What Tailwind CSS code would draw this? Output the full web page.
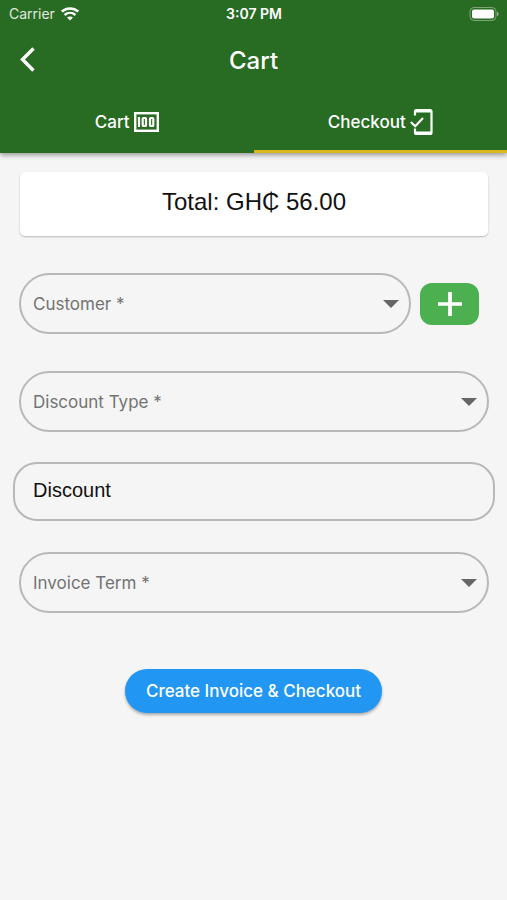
<!DOCTYPE html>
<html lang="en">
<head>
<meta charset="utf-8">
<meta name="viewport" content="width=device-width, initial-scale=1">
<title>Cart</title>
<script src="https://cdn.jsdelivr.net/npm/@tailwindcss/browser@4"></script>
</head>
<body class="min-h-screen bg-[#f5f5f5] font-['Inter','Liberation_Sans',sans-serif]">
<header class="bg-[#286b22] text-white shadow-[0_2px_5px_rgba(0,0,0,0.4)]">
  <div class="grid h-7 grid-cols-3 items-center pl-[9px] pr-2 text-[14px] leading-4">
    <div class="flex items-center gap-1.5 text-white/85">
      <span>Carrier</span>
      <svg class="h-[14px] w-[18px]" viewBox="0 0 18 14" fill="none" aria-hidden="true">
        <path d="M.8 4.600C5.500.4 12.500.4 17.200 4.600" stroke="#fff" stroke-width="2.600"/>
        <path d="M3.600 8C6.800 5.100 11.200 5.100 14.400 8" stroke="#fff" stroke-width="2.400"/>
        <path d="M6 10.600C7.700 9 10.300 9 12 10.600L9 13.600Z" fill="#fff"/>
      </svg>
    </div>
    <span class="text-center font-semibold">3:07 PM</span>
    <svg class="h-[14px] w-[30px] justify-self-end" viewBox="0 0 30 14" aria-hidden="true">
      <rect x="1" y=".5" width="26" height="13" rx="4" fill="none" stroke="#fff" stroke-opacity=".4"/>
      <rect x="3" y="2.500" width="22" height="9" rx="2" fill="#fff"/>
      <path d="M28 5c2.200.8 2.200 3.200 0 4z" fill="#fff" fill-opacity=".5"/>
    </svg>
  </div>
  <div class="grid h-16 grid-cols-[56px_1fr_56px] items-center">
    <button type="button" aria-label="Back" class="flex h-12 items-center justify-center">
      <svg class="h-7 w-5" viewBox="0 0 20 28" fill="none" aria-hidden="true"><path d="M15.500 2.500 4.500 13.500 15.500 24.500" stroke="#fff" stroke-width="3.400"/></svg>
    </button>
    <h1 class="pt-px text-center text-[24px] leading-7 font-medium">Cart</h1>
  </div>
  <nav class="grid grid-cols-2 text-[17px] leading-5 font-medium">
    <a href="#cart" class="flex h-[61px] items-center justify-center gap-1 border-b-3 border-transparent pt-px">Cart
      <svg class="h-5 w-[25px]" viewBox="0 0 25 20" fill="none" stroke="#fff" aria-hidden="true">
        <rect x="1.200" y="1.200" width="22.600" height="17.600" stroke-width="2.400"/>
        <path d="M5 5v10" stroke-width="2.200"/>
        <rect x="8.700" y="6" width="3.300" height="8" rx=".8" stroke-width="2.200"/>
        <rect x="16" y="6" width="3.300" height="8" rx=".8" stroke-width="2.200"/>
      </svg>
    </a>
    <a href="#checkout" aria-current="page" class="flex h-[61px] items-center justify-center gap-1 border-b-3 border-[#dbb81f] pt-px">Checkout
      <svg class="h-7 w-[23px]" viewBox="0 0 23 28" fill="none" stroke="#fff" aria-hidden="true">
        <path d="M5 7.500V3.500Q5 2 6.500 2H20Q21.500 2 21.500 3.500V24.500Q21.500 26 20 26H6.500Q5 26 5 24.500V20.500" stroke-width="2.200"/>
        <path d="M5.500 3H21M5.500 25H21" stroke-width="3"/>
        <path d="M.8 14 5.200 18.200 13 10" stroke-width="2.200"/>
      </svg>
    </a>
  </nav>
</header>
<main>
  <form class="flex flex-col pt-[19px]">
    <p class="mr-[19px] ml-5 flex h-16 items-center justify-center rounded-[5px] bg-white pb-1 font-['Liberation_Sans',sans-serif] text-[24px] leading-7 text-[#111] shadow-[0_1px_2px_rgba(0,0,0,0.25)]">Total: GH₵ 56.00</p>

    <div class="mt-[37px] mr-7 ml-[19px] flex items-center gap-[9px]">
      <div class="relative flex-1">
        <select aria-label="Customer" class="block h-[61px] w-full appearance-none rounded-full border-2 border-[#b8b8b8] bg-transparent px-3 pt-0.5 text-[17px] text-[#737373]"><option>Customer *</option></select>
        <svg class="pointer-events-none absolute top-[27px] right-3 h-2 w-4" viewBox="0 0 16 8" aria-hidden="true"><path d="M0 0h16L8 8z" fill="#666"/></svg>
      </div>
      <button type="button" aria-label="Add customer" class="flex h-[42px] w-[59px] items-center justify-center rounded-xl bg-[#4caf50]">
        <svg class="h-6 w-6" viewBox="0 0 24 24" aria-hidden="true"><path d="M12 0v24M0 12h24" stroke="#fff" stroke-width="3.700"/></svg>
      </button>
    </div>

    <div class="relative mr-[18px] ml-[19px] mt-[37px]">
      <select aria-label="Discount type" class="block h-[61px] w-full appearance-none rounded-full border-2 border-[#b8b8b8] bg-transparent px-3 pt-0.5 text-[17px] text-[#737373]"><option>Discount Type *</option></select>
      <svg class="pointer-events-none absolute top-[27px] right-3 h-2 w-4" viewBox="0 0 16 8" aria-hidden="true"><path d="M0 0h16L8 8z" fill="#666"/></svg>
    </div>

    <div class="mr-3 ml-[13px] mt-[30px]">
      <input type="text" aria-label="Discount" placeholder="Discount" class="block h-[59px] w-full rounded-3xl border-2 border-[#b8b8b8] bg-transparent px-[18px] pb-0.5 font-['Liberation_Sans',sans-serif] text-[20px] text-[#111] placeholder:text-[#111]">
    </div>

    <div class="relative mr-[18px] ml-[19px] mt-[31px]">
      <select aria-label="Invoice term" class="block h-[61px] w-full appearance-none rounded-full border-2 border-[#b8b8b8] bg-transparent px-3 pt-0.5 text-[17px] text-[#737373]"><option>Invoice Term *</option></select>
      <svg class="pointer-events-none absolute top-[27px] right-3 h-2 w-4" viewBox="0 0 16 8" aria-hidden="true"><path d="M0 0h16L8 8z" fill="#666"/></svg>
    </div>

    <button type="submit" class="mt-14 h-11 self-center rounded-full bg-[#2196f3] px-[21px] pt-0.5 text-[17px] font-medium text-white shadow-[0_2px_3px_rgba(0,0,0,0.3)]">Create Invoice &amp; Checkout</button>
  </form>
</main>
</body>
</html>
